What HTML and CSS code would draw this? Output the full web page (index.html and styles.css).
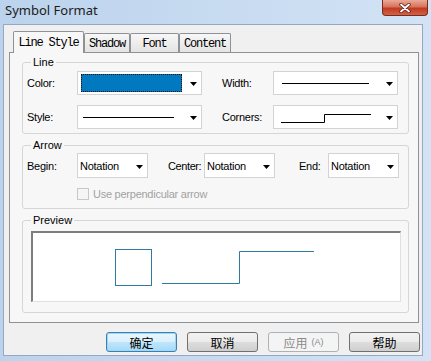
FILE: index.html
```html
<!DOCTYPE html>
<html>
<head>
<meta charset="utf-8">
<link rel="stylesheet" href="styles.css">
</head>
<body>
<div class="window">
  <div class="titlebar">
    <span class="title">Symbol Format</span>
    <div class="close">
      <svg width="12" height="10" viewBox="0 0 12 10"><path d="M2 1.5 L10 8.5 M10 1.5 L2 8.5" stroke="#5a1f14" stroke-width="3.4" stroke-linecap="round"/><path d="M2 1.5 L10 8.5 M10 1.5 L2 8.5" stroke="#fff" stroke-width="1.8" stroke-linecap="round"/></svg>
    </div>
  </div>
  <div class="client">
    <div class="tabs">
      <div class="tab active t1">Line Style</div>
      <div class="tab t2">Shadow</div>
      <div class="tab t3">Font</div>
      <div class="tab t4">Content</div>
    </div>
    <div class="panel">
      <div class="group g-line">
        <div class="legend">Line</div>
        <div class="line-grid">
          <div class="field">
            <span class="lbl">Color:</span>
            <div class="combo c-wide">
              <div class="swatch"></div>
              <svg class="arrow" width="7" height="4" viewBox="0 0 7 4"><path d="M0 0H7L3.5 4Z" fill="#000"/></svg>
            </div>
          </div>
          <div class="field">
            <span class="lbl lbl2">Width:</span>
            <div class="combo c-wide">
              <svg class="ln-width" width="87" height="3" viewBox="0 0 87 3"><path d="M0 1.5H87" stroke="#000" stroke-width="1"/></svg>
              <svg class="arrow" width="7" height="4" viewBox="0 0 7 4"><path d="M0 0H7L3.5 4Z" fill="#000"/></svg>
            </div>
          </div>
          <div class="field">
            <span class="lbl">Style:</span>
            <div class="combo c-wide">
              <svg class="ln-style" width="91" height="3" viewBox="0 0 91 3"><path d="M0 1.5H91" stroke="#000" stroke-width="1"/></svg>
              <svg class="arrow" width="7" height="4" viewBox="0 0 7 4"><path d="M0 0H7L3.5 4Z" fill="#000"/></svg>
            </div>
          </div>
          <div class="field">
            <span class="lbl lbl2">Corners:</span>
            <div class="combo c-wide">
              <svg class="ln-corner" width="90" height="10" viewBox="0 0 90 10"><path d="M0 9.5H43.5V1.5H90" fill="none" stroke="#000" stroke-width="1"/></svg>
              <svg class="arrow" width="7" height="4" viewBox="0 0 7 4"><path d="M0 0H7L3.5 4Z" fill="#000"/></svg>
            </div>
          </div>
        </div>
      </div>

      <div class="group g-arrow">
        <div class="legend">Arrow</div>
        <div class="arrow-row">
          <span class="lbl">Begin:</span>
          <div class="combo c-note">
            <span>Notation</span>
            <svg class="arrow" width="7" height="4" viewBox="0 0 7 4"><path d="M0 0H7L3.5 4Z" fill="#000"/></svg>
          </div>
          <span class="lbl lbl-center">Center:</span>
          <div class="combo c-note">
            <span>Notation</span>
            <svg class="arrow" width="7" height="4" viewBox="0 0 7 4"><path d="M0 0H7L3.5 4Z" fill="#000"/></svg>
          </div>
          <span class="lbl lbl-end">End:</span>
          <div class="combo c-note">
            <span>Notation</span>
            <svg class="arrow" width="7" height="4" viewBox="0 0 7 4"><path d="M0 0H7L3.5 4Z" fill="#000"/></svg>
          </div>
        </div>
        <div class="check-row">
          <span class="cb"></span>
          <span>Use perpendicular arrow</span>
        </div>
      </div>

      <div class="group g-preview">
        <div class="legend">Preview</div>
        <div class="preview">
          <svg width="367" height="68" viewBox="0 0 367 68">
            <rect x="82.5" y="16.5" width="36" height="36" fill="none" stroke="#2f7aa0" stroke-width="1"/>
            <path d="M129 50.5H206.5V18.5H281" fill="none" stroke="#2f7aa0" stroke-width="1"/>
          </svg>
        </div>
      </div>
    </div>
    <div class="buttons">
      <div class="btn default">确定</div>
      <div class="btn">取消</div>
      <div class="btn disabled">应用<span class="acc">(A)</span></div>
      <div class="btn">帮助</div>
    </div>
  </div>
</div>
</body>
</html>
```

FILE: styles.css
```css
* {
  box-sizing: border-box;
  margin: 0;
  padding: 0;
}

html, body {
  width: 431px;
  height: 361px;
  overflow: hidden;
}

body {
  background: linear-gradient(to right, #bcd3ed, #c9dcf1 60%, #d3e3f5);
  font-family: "Liberation Sans", Arial, sans-serif;
  font-size: 11px;
  letter-spacing: -0.25px;
  color: #000;
}

.window {
  display: flex;
  flex-direction: column;
  height: 361px;
}

.titlebar {
  height: 24px;
  display: flex;
  justify-content: space-between;
  align-items: flex-start;
  padding: 0 3px 0 5px;
}

.title {
  font-family: "Noto Sans", sans-serif;
  font-size: 13px;
  letter-spacing: 0;
  line-height: 21px;
  color: #1b1b1b;
}

.close {
  width: 46px;
  height: 16px;
  border: 1px solid #7a2b1c;
  border-top: none;
  border-radius: 0 0 4px 4px;
  background: linear-gradient(#eaa998, #d7735c 45%, #c23a1f 55%, #d0634a);
  display: flex;
  align-items: center;
  justify-content: center;
}

.client {
  margin: 0 8px 0 3px;
  height: 332px;
  background: #f0f0f0;
  border: 1px solid #95a8bf;
}

/* Tabs */
.tabs {
  display: flex;
  align-items: flex-end;
  height: 27px;
  padding-left: 9px;
}

.tab {
  font-family: "Liberation Mono", "Courier New", monospace;
  font-size: 12px;
  letter-spacing: -1.2px;
  height: 19px;
  border: 1px solid #8e9196;
  border-bottom: none;
  border-radius: 2px 2px 0 0;
  background: linear-gradient(#f7f7f7, #e4e4e4);
  display: flex;
  align-items: center;
  justify-content: center;
  padding-top: 1px;
}

.tab.active {
  height: 22px;
  margin-bottom: -1px;
  background: #f7f7f7;
  position: relative;
  z-index: 1;
  padding-top: 0;
}

.t1 { width: 71px; }
.t2 { width: 46px; }
.t3 { width: 49px; }
.t4 { width: 52px; }

/* Panel */
.panel {
  margin: 0 3px 0 5px;
  height: 271px;
  border: 1px solid #8e9196;
  background: #f7f7f7;
  padding: 9px 9px 0 12px;
}

.group {
  border: 1px solid #d6d6d6;
  border-radius: 3px;
}

.legend {
  width: fit-content;
  margin: -7px 0 0 8px;
  padding: 0 2px;
  height: 13px;
  line-height: 13px;
  background: #f7f7f7;
  letter-spacing: 0;
}

.g-line { height: 72px; }
.g-arrow { height: 64px; margin-top: 11px; }
.g-preview { height: 93px; margin-top: 11px; }

.lbl {
  display: inline-block;
  width: 50px;
  flex: none;
  white-space: nowrap;
}

.lbl2 { width: 51px; }

.line-grid {
  display: grid;
  grid-template-columns: 175px 176px;
  column-gap: 20px;
  row-gap: 10px;
  margin: 2px 0 0 4px;
}

.field {
  display: flex;
  align-items: center;
  height: 24px;
}

.combo {
  height: 24px;
  border: 1px solid #d3d3d3;
  background: #fff;
  display: flex;
  align-items: center;
  justify-content: space-between;
  padding: 0 4px 0 2px;
  flex: none;
}

.c-wide { width: 125px; }

.arrow {
  display: block;
  margin-top: 2px;
  flex: none;
}

.swatch {
  width: 101px;
  height: 18px;
  margin-left: 1px;
  background: #0079c1;
  border: 1px dotted #2a0d08;
}

.ln-width { margin-left: 6px; }
.ln-style { margin-left: 3px; }
.ln-corner { margin: 2px 0 0 5px; }

/* Arrow group */
.arrow-row {
  display: flex;
  align-items: center;
  margin: 1px 0 0 4px;
}

.c-note {
  width: 71px;
  height: 25px;
  padding: 0 4px 0 2px;
}

.lbl-center {
  width: 36px;
  margin-left: 20px;
  letter-spacing: -0.4px;
}

.lbl-end {
  width: 29px;
  margin-left: 24px;
}

.check-row {
  display: flex;
  align-items: center;
  margin: 10px 0 0 54px;
  color: #a2a2a2;
}

.cb {
  width: 12px;
  height: 12px;
  border: 1px solid #c8c8c8;
  background: #f5f5f5;
  margin-right: 4px;
}

/* Preview */
.preview {
  margin: 4px 0 0 8px;
  width: 370px;
  height: 71px;
  background: #fff;
  border-top: 2px solid #7d7d7d;
  border-left: 2px solid #7d7d7d;
  border-right: 1px solid #dfdfdf;
  border-bottom: 1px solid #dfdfdf;
}

.preview svg { display: block; }

/* Buttons */
.buttons {
  display: flex;
  justify-content: flex-end;
  gap: 10px;
  margin-top: 9px;
  padding-right: 2px;
}

.btn {
  width: 71px;
  height: 20px;
  border: 1px solid #707070;
  border-radius: 3px;
  background: linear-gradient(#f2f2f2 0%, #ebebeb 50%, #dddddd 51%, #cfcfcf 100%);
  font-family: "Noto Sans CJK SC", sans-serif;
  font-size: 12px;
  letter-spacing: 0;
  display: flex;
  align-items: center;
  justify-content: center;
  color: #000;
}

.btn.default {
  border-color: #3c7fb1;
  box-shadow: inset 0 0 0 1px #9fd7f3;
  background: linear-gradient(#eaf6fd 0%, #d9f0fc 50%, #bee6fd 51%, #a7d9f5 100%);
}

.btn.disabled {
  border-color: #adb2b5;
  background: #f4f4f4;
  color: #8a8a8a;
}

.acc {
  font-family: "Liberation Sans", sans-serif;
  font-size: 9px;
  margin-left: 4px;
}
```
